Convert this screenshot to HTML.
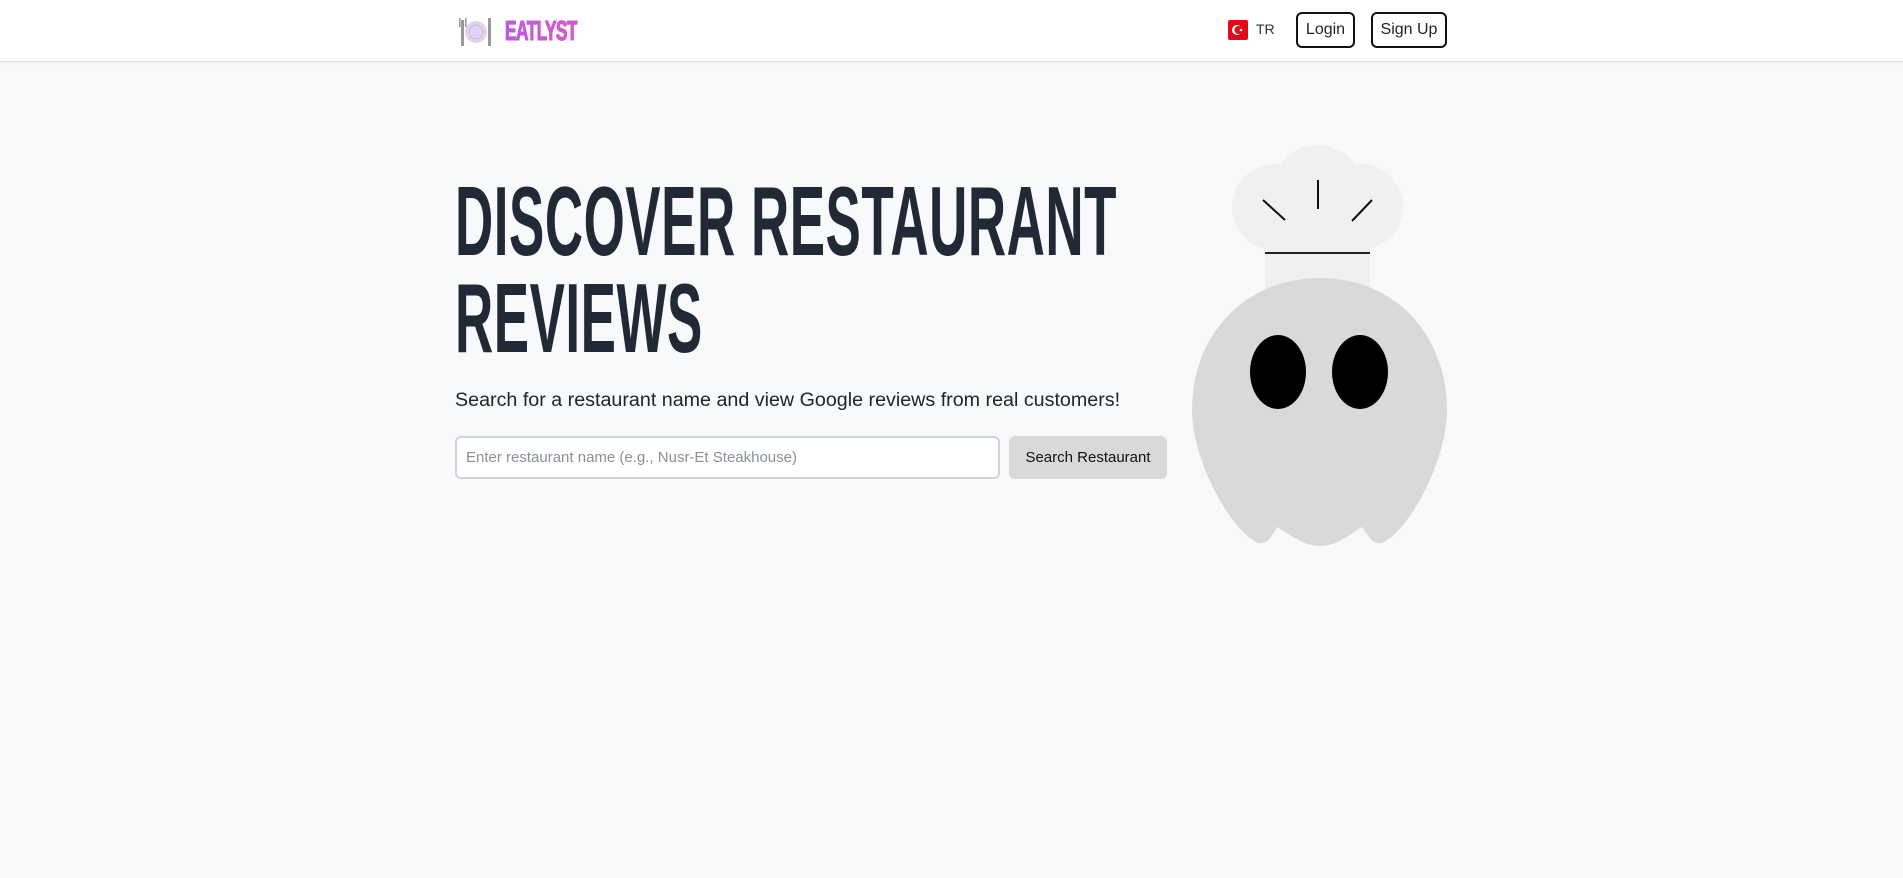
<!DOCTYPE html>
<html><head><meta charset="utf-8">
<style>
*{margin:0;padding:0;box-sizing:border-box}
html,body{width:1903px;height:878px;overflow:hidden;background:#f8f9fa;font-family:"Liberation Sans",sans-serif;color:#212529}
.nav{position:absolute;left:0;top:0;width:1903px;height:62px;background:#fff;border-bottom:1px solid #dee2e6;box-shadow:0 1px 3px rgba(0,0,0,.06)}
.logo{position:absolute;left:505px;top:17px;font-weight:bold;font-size:28px;line-height:28px;letter-spacing:-1px;background:linear-gradient(90deg,#b85ae6,#e05ab8);-webkit-background-clip:text;color:transparent;display:inline-block;transform:scaleX(.62);transform-origin:left;-webkit-text-stroke:1px #c858d8}
.flag{position:absolute;left:1228px;top:20px;width:20px;height:20px;background:#e30a17;border-radius:2px}
.tr{position:absolute;left:1256px;top:21px;font-size:14px;color:#333}
.btn{position:absolute;top:12px;height:36px;border:2px solid #111;border-radius:6px;background:#fff;font-size:16px;line-height:32px;text-align:center;color:#212529}
h1{position:absolute;left:455px;font-weight:bold;font-size:98px;line-height:98px;color:#212936;white-space:nowrap;transform-origin:left top;letter-spacing:1px}
.sub{position:absolute;left:455px;top:390px;font-size:19px;color:#212529;white-space:nowrap}
.inp{position:absolute;left:455px;top:436px;width:545px;height:43px;background:#fff;border:2px solid #ced4da;border-radius:6px;font-size:15px;color:#8a9099;padding:11px 9px}
.sb{position:absolute;left:1009px;top:436px;width:158px;height:43px;background:#d9d9d9;border-radius:6px;font-size:15px;line-height:43px;text-align:center;color:#111}
</style></head><body>
<div class="nav">
<svg style="position:absolute;left:458px;top:16px" width="34" height="32" viewBox="0 0 34 32">
<rect x="3" y="4" width="3" height="26" fill="#999"/><rect x="1" y="2" width="1.5" height="9" fill="#999"/><rect x="7" y="2" width="1.5" height="9" fill="#999"/>
<circle cx="18" cy="16" r="11" fill="#e3d3f0"/><circle cx="18" cy="16" r="7" fill="none" stroke="#cbb8e0" stroke-width="1"/>
<rect x="30" y="2" width="3" height="28" fill="#999"/></svg>
<div class="logo">EATLYST</div>
<div class="flag"><svg width="20" height="20"><circle cx="9" cy="10" r="5" fill="#fff"/><circle cx="10.5" cy="10" r="4" fill="#e30a17"/><circle cx="13" cy="10" r="1.3" fill="#fff"/></svg></div>
<div class="tr">TR</div>
<div class="btn" style="left:1296px;width:59px">Login</div>
<div class="btn" style="left:1371px;width:76px">Sign Up</div>
</div>
<h1 id="h1a" style="top:172px">DISCOVER RESTAURANT</h1>
<h1 id="h1b" style="top:269px">REVIEWS</h1>
<div class="sub" id="sub">Search for a restaurant name and view Google reviews from real customers!</div>
<div class="inp">Enter restaurant name (e.g., Nusr-Et Steakhouse)</div>
<div class="sb">Search Restaurant</div>
<svg style="position:absolute;left:0;top:0" width="1903" height="878">
<circle cx="1275" cy="207" r="43" fill="#eff0f0"/>
<circle cx="1318" cy="190" r="45" fill="#eff0f0"/>
<circle cx="1360" cy="207" r="43" fill="#eff0f0"/>
<rect x="1265" y="200" width="105" height="95" fill="#eff0f0"/>
<line x1="1265" y1="253" x2="1370" y2="253" stroke="#222" stroke-width="2"/>
<line x1="1263" y1="200" x2="1285" y2="220" stroke="#111" stroke-width="2"/>
<line x1="1318" y1="180" x2="1318" y2="209" stroke="#111" stroke-width="2"/>
<line x1="1352" y1="221" x2="1372" y2="200" stroke="#111" stroke-width="2"/>
<path d="M1320,278 C1245,278 1192,335 1192,410 C1192,460 1230,530 1258,543 C1268,545 1272,535 1277,527 C1295,538 1305,546 1320,546 C1335,546 1345,538 1362,527 C1368,535 1372,545 1382,543 C1410,530 1447,460 1447,410 C1447,335 1395,278 1320,278Z" fill="#d9d9d9"/>
<ellipse cx="1278" cy="372" rx="28" ry="37" fill="#000"/>
<ellipse cx="1360" cy="372" rx="28" ry="37" fill="#000"/>
</svg>
<script>
function fit(id,w){var e=document.getElementById(id);var sx=w/e.scrollWidth;e.style.transform='scaleX('+sx+')';}
fit('h1a',662);
var a=document.getElementById('h1a'),b=document.getElementById('h1b');b.style.transform=a.style.transform;
var s=document.getElementById('sub');s.style.transform='scaleX('+(665/s.scrollWidth)+')';s.style.transformOrigin='left';
</script>
</body></html>
